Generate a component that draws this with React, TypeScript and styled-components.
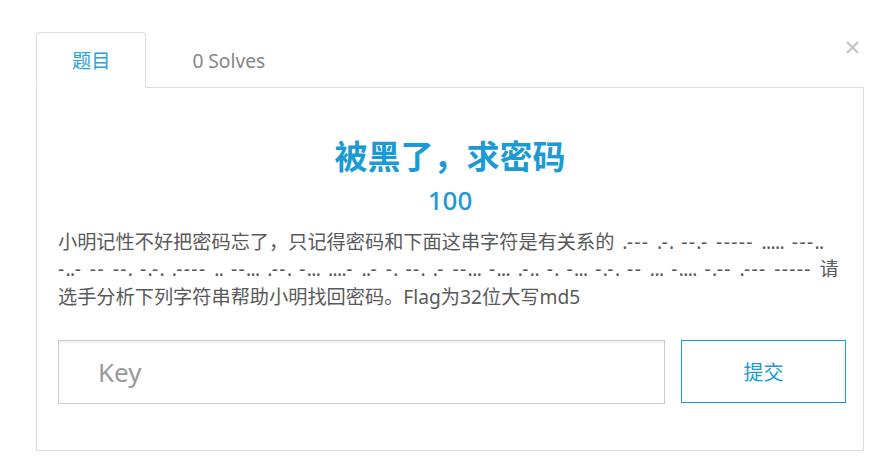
import React from "react";
import styled, { createGlobalStyle } from "styled-components";

const Global = createGlobalStyle`
  html, body { margin: 0; padding: 0; background: #fff; }
  body { font-family: "Noto Sans", "Noto Sans CJK SC", sans-serif; }
  * { box-sizing: border-box; }
`;

const Wrapper = styled.div`
  width: 828px;
  margin: 32px 0 0 36px;
`;

const TabBar = styled.div`
  display: flex;
  align-items: flex-start;
  height: 56px;
  border-bottom: 1px solid #dddddd;
`;

const Tab = styled.div<{ $active?: boolean }>`
  height: 56px;
  margin-bottom: -1px;
  margin-right: 10px;
  padding: 2px 35px 0;
  display: flex;
  align-items: center;
  font-size: 19.2px;
  line-height: 1;
  border: 1px solid ${(p) => (p.$active ? "#dddddd" : "transparent")};
  border-bottom-color: transparent;
  border-radius: 4px 4px 0 0;
  background: ${(p) => (p.$active ? "#ffffff" : "transparent")};
  color: ${(p) => (p.$active ? "#2aa3dc" : "#868686")};
`;

const Close = styled.button`
  margin-left: auto;
  margin-top: 7px;
  margin-right: 5px;
  width: 14px;
  height: 16px;
  padding: 0;
  border: 0;
  background: transparent;
  display: flex;
  align-items: center;
  justify-content: center;
  cursor: pointer;
`;

const Panel = styled.div`
  border: 1px solid #dddddd;
  border-top: 0;
  padding: 49px 21px 46px 21px;
`;

const Title = styled.h3`
  margin: 0;
  text-align: center;
  font-size: 33px;
  line-height: 1.2;
  font-weight: 700;
  color: #1b9ad6;
`;

const Points = styled.div`
  margin-top: 8px;
  text-align: center;
  font-size: 26px;
  line-height: 1.2;
  font-weight: 500;
  color: #1b9ad6;
`;

const Desc = styled.p`
  margin: 12px 0 0 0;
  font-size: 19.2px;
  line-height: 27.4px;
  color: #595959;
`;

const MorseText = styled.span`
  letter-spacing: -0.6px;
  word-spacing: 3.3px;
`;

const Dash = styled.span`
  letter-spacing: 1.35px;
`;

const Form = styled.div`
  display: flex;
  align-items: flex-start;
  gap: 16px;
  margin-top: 30px;
  margin-right: -4px;
`;

const KeyInput = styled.input`
  flex: 1;
  height: 64px;
  border: 1px solid #cccccc;
  border-radius: 0;
  box-shadow: inset 0 2px 2px rgba(0, 0, 0, 0.06);
  padding: 0 0 0 39px;
  font-family: "Noto Sans", "Noto Sans CJK SC", sans-serif;
  font-size: 26px;
  color: #555;
  outline: none;
  &::placeholder { color: #9a9a9a; }
`;

const Submit = styled.button`
  width: 165px;
  height: 63px;
  border: 1px solid #1b9ad6;
  background: #fff;
  color: #1b9ad6;
  font-family: "Noto Sans", "Noto Sans CJK SC", sans-serif;
  font-size: 20px;
  padding: 0;
  cursor: pointer;
`;

const morse =
  " .--- .-. --.- ----- ..... ---.. -..- -- --. -.-. .---- .. --... .--. -... ....- ..- -. --. .- --... -... .-.. -. -... -.-. -- ... -.... -.-- .--- ----- ";

function Morse({ code }: { code: string }) {
  const parts = code.split(/(-+)/).filter((s) => s.length > 0);
  return (
    <MorseText>
      {parts.map((p, i) => (p[0] === "-" ? <Dash key={i}>{p}</Dash> : <React.Fragment key={i}>{p}</React.Fragment>))}
    </MorseText>
  );
}

export default function App() {
  return (
    <>
      <Global />
      <Wrapper>
        <TabBar>
          <Tab $active>题目</Tab>
          <Tab>0 Solves</Tab>
          <Close aria-label="close">
            <svg width="13" height="13" viewBox="0 0 13 13">
              <path d="M1 1 L12 12 M12 1 L1 12" stroke="#c4c4c4" strokeWidth="2.2" />
            </svg>
          </Close>
        </TabBar>
        <Panel>
          <Title>被黑了，求密码</Title>
          <Points>100</Points>
          <Desc>
            小明记性不好把密码忘了，只记得密码和下面这串字符是有关系的
            <Morse code={morse} />
            请选手分析下列字符串帮助小明找回密码。Flag为32位大写md5
          </Desc>
          <Form>
            <KeyInput placeholder="Key" />
            <Submit>提交</Submit>
          </Form>
        </Panel>
      </Wrapper>
    </>
  );
}
